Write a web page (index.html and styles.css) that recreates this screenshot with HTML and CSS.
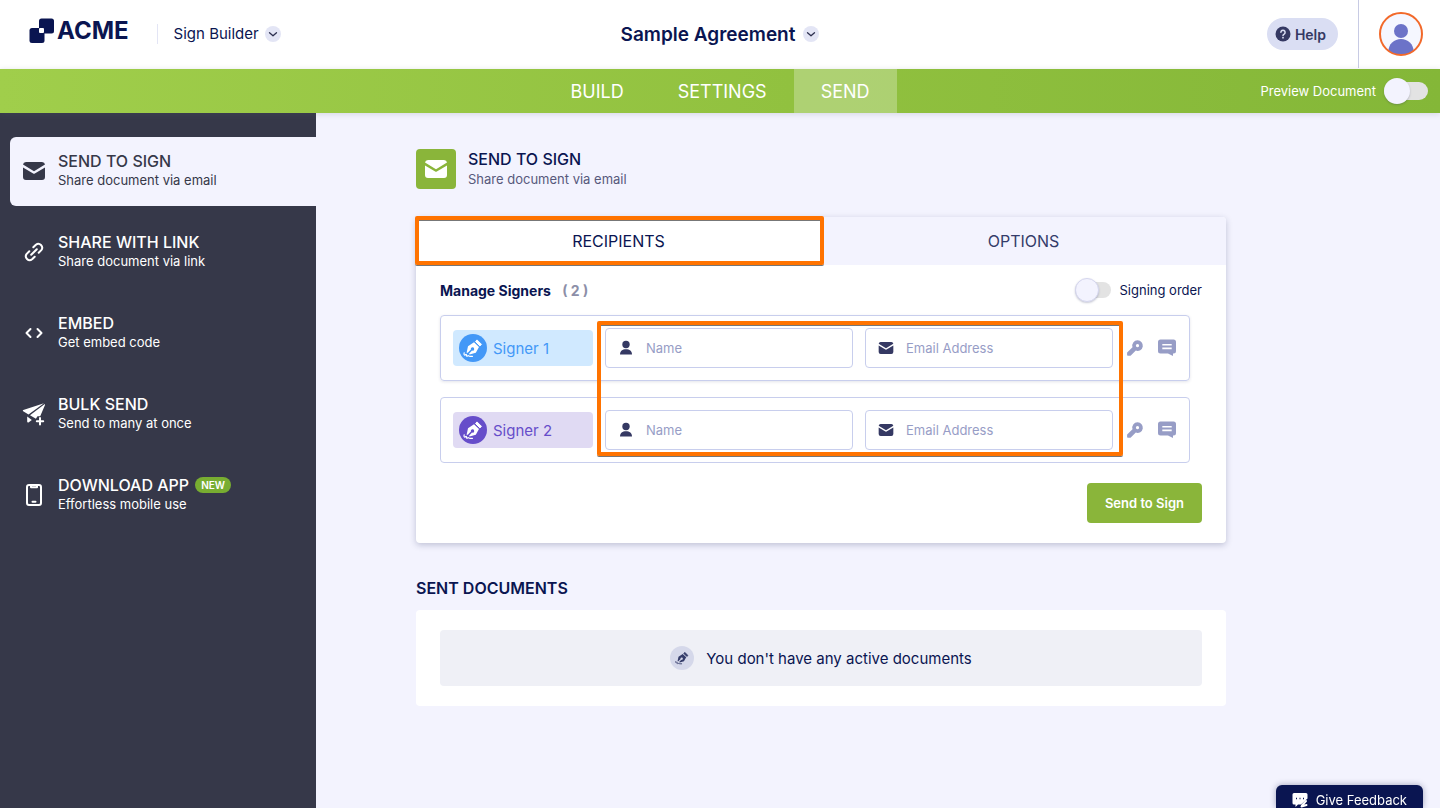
FILE: index.html
```
<!DOCTYPE html>
<html lang="en">
<head>
    <meta charset="UTF-8" />
    <meta name="viewport" content="width=device-width, initial-scale=1" />
    <title>Sign Builder - Sample Agreement</title>
    <link rel="stylesheet" href="styles.css">
</head>
<body>
    <!-- shared icons -->
    <svg class="sprite" aria-hidden="true">
        <symbol id="i-mail" viewBox="0 0 24 20">
            <path d="M4 1h16a3 3 0 0 1 3 2.600L12 10.200 1 3.600A3 3 0 0 1 4 1z" />
            <path d="M1 6.400l10.200 6a1.600 1.600 0 0 0 1.600 0L23 6.400V16a3 3 0 0 1-3 3H4a3 3 0 0 1-3-3z" />
        </symbol>
        <symbol id="i-user" viewBox="0 0 14 16">
            <circle cx="7" cy="4.500" r="3.700" />
            <path d="M1 14.500C1 11 3.500 9.200 7 9.200s6 1.800 6 5.300z" />
        </symbol>
        <symbol id="i-pen" viewBox="0 0 20 20">
            <path fill-rule="evenodd" d="M3.600 14.800L5 8.300 11 4.200 16 9 12.800 14.800 6.600 16.400 6 15.800 9 12.600A1.700 1.700 0 1 0 7.900 11.500L4.800 14.700z" />
            <path d="M12.500 3.500L14 1.900l4.500 4.500-1.600 1.500z" stroke-linejoin="round" stroke="currentColor" />
            <path d="M1.200 14.800c-.6 1.800.2 2.800 1.200 1.900.8-.7 1.300-.3 1 .7-.2.900.7 1 1.500.4.700-.5 1 .5 2 .5h2.600" fill="none" stroke="currentColor" stroke-width="1.200" stroke-linecap="round" />
        </symbol>
        <symbol id="i-key" viewBox="0 0 20 20">
            <path fill-rule="evenodd" d="M12.500 2.300a5.300 5.300 0 1 1-1.700 10.300L5.800 17.500a1.200 1.200 0 0 1-.8.300H2.900a.8.800 0 0 1-.8-.8v-2a1.200 1.200 0 0 1 .3-.8l5.100-5A5.300 5.300 0 0 1 12.500 2.300zm0 3.700a1.600 1.600 0 1 0 .01 0z" />
        </symbol>
        <symbol id="i-note" viewBox="0 0 20 20">
            <path fill-rule="evenodd" d="M3.500 1.500h13A2.500 2.500 0 0 1 19 4v9a2.500 2.500 0 0 1-2.500 2.500H16V18l-5-2.500H3.500A2.500 2.500 0 0 1 1 13V4a2.500 2.500 0 0 1 2.500-2.500zM5.300 6v1.600h9.400V6zm0 3.600v1.600h9.400V9.600z" />
        </symbol>
        <symbol id="i-chevron" viewBox="0 0 16 16">
            <path d="M4.500 6.700L8 9.800l3.500-3.100" fill="none" stroke="#2e3150" stroke-width="1.300" stroke-linecap="round" stroke-linejoin="round" />
        </symbol>
    </svg>

    <header class="header">
        <div class="header-left">
            <a class="logo" href="#">
                <svg width="26" height="26" viewBox="0 0 26 26" aria-hidden="true">
                    <rect x="10" y="0.500" width="15" height="15" rx="2.500" />
                    <rect x="0.500" y="10" width="15" height="15" rx="2.500" />
                    <rect class="logo-gap" x="10" y="10" width="5" height="5" rx="1" />
                </svg>
                <span>ACME</span>
            </a>
            <button type="button" class="product">Sign Builder
                <svg class="chevron"><use href="#i-chevron" /></svg>
            </button>
        </div>
        <button type="button" class="doc-title">Sample Agreement
            <svg class="chevron"><use href="#i-chevron" /></svg>
        </button>
        <div class="header-right">
            <button type="button" class="help">
                <svg width="16" height="16" viewBox="0 0 16 16" aria-hidden="true">
                    <circle cx="8" cy="8" r="7.500" fill="#353963" />
                    <path d="M5.900 6.300a2.100 2.100 0 1 1 3.200 1.800c-.7.400-1.100.7-1.100 1.400" fill="none" stroke="#dadef3" stroke-width="1.500" stroke-linecap="round" />
                    <circle cx="8" cy="11.700" r="0.900" fill="#dadef3" />
                </svg>
                Help
            </button>
            <button type="button" class="account" aria-label="Account">
                <svg width="44" height="44" viewBox="0 0 44 44">
                    <clipPath id="face"><circle cx="22" cy="22" r="21" /></clipPath>
                    <circle cx="22" cy="22" r="21" fill="#f5f7ff" />
                    <g clip-path="url(#face)" fill="#6c73c8">
                        <circle cx="22" cy="19" r="7" />
                        <path d="M9.500 44v-5a12.500 12 0 0 1 25 0v5z" />
                    </g>
                    <circle cx="22" cy="22" r="21" fill="none" stroke="#f2692a" stroke-width="2" />
                </svg>
            </button>
        </div>
    </header>

    <div class="navbar">
        <nav class="steps">
            <a href="#">BUILD</a>
            <a href="#">SETTINGS</a>
            <a href="#" class="active">SEND</a>
        </nav>
        <label class="preview">Preview Document
            <input type="checkbox" class="switch switch-lg">
        </label>
    </div>

    <div class="layout">
        <aside class="sidebar">
            <a href="#" class="side-item active">
                <svg width="24" height="20"><use href="#i-mail" /></svg>
                <span class="side-text"><strong>SEND TO SIGN</strong><small>Share document via email</small></span>
            </a>
            <a href="#" class="side-item">
                <svg width="24" height="24" viewBox="0 0 24 24" class="line">
                    <path d="M9.200 14.800l5.600-5.600M11.300 7.300l2.600-2.600a3.850 3.850 0 0 1 5.400 5.400l-2.600 2.600M12.700 16.700l-2.600 2.600a3.850 3.850 0 0 1-5.400-5.400l2.600-2.600" />
                </svg>
                <span class="side-text"><strong>SHARE WITH LINK</strong><small>Share document via link</small></span>
            </a>
            <a href="#" class="side-item">
                <svg width="24" height="24" viewBox="0 0 24 24" class="line">
                    <path d="M8.500 8l-4 4 4 4M15.500 8l4 4-4 4" />
                </svg>
                <span class="side-text"><strong>EMBED</strong><small>Get embed code</small></span>
            </a>
            <a href="#" class="side-item">
                <svg width="24" height="24" viewBox="0 0 24 24">
                    <path d="M22 1.200L1.300 7.900c-.6.200-.6 1-.1 1.300l5.300 3.200z" />
                    <path d="M22.800 1.900L8 13.200l5.900 3.600 1.600-2.600h2.700L23 3z" />
                    <path d="M5.200 14.500l4.600 3.400-3.300 2.500c-.6.400-1.300.1-1.300-.6z" />
                    <path d="M18 16v6.400M14.800 19.200h6.400" stroke="currentColor" stroke-width="2" stroke-linecap="round" />
                </svg>
                <span class="side-text"><strong>BULK SEND</strong><small>Send to many at once</small></span>
            </a>
            <a href="#" class="side-item">
                <svg width="24" height="24" viewBox="0 0 24 24" class="line">
                    <rect x="5" y="2" width="14" height="20" rx="2" />
                    <path d="M9 3v1.200h6V3M10.500 18.700h3" />
                </svg>
                <span class="side-text"><strong>DOWNLOAD APP <em>NEW</em></strong><small>Effortless mobile use</small></span>
            </a>
        </aside>

        <main class="main">
            <div class="page-head">
                <span class="page-icon"><svg width="24" height="20"><use href="#i-mail" /></svg></span>
                <div>
                    <h1>SEND TO SIGN</h1>
                    <p>Share document via email</p>
                </div>
            </div>

            <section class="card">
                <div class="tabs" role="tablist">
                    <button type="button" role="tab" class="tab active" aria-selected="true">RECIPIENTS</button>
                    <button type="button" role="tab" class="tab" aria-selected="false">OPTIONS</button>
                    <div class="mark mark-tab"></div>
                </div>
                <div class="card-body">
                    <div class="signers-head">
                        <h2>Manage Signers <span>( 2 )</span></h2>
                        <label class="order"><input type="checkbox" class="switch"> Signing order</label>
                    </div>
                    <div class="signers">
                        <div class="signer blue">
                            <div class="chip"><span class="pen"><svg width="20" height="20"><use href="#i-pen" /></svg></span>Signer 1</div>
                            <label class="field"><svg width="14" height="16"><use href="#i-user" /></svg><input type="text" placeholder="Name" aria-label="Signer 1 name"></label>
                            <label class="field"><svg width="16" height="14"><use href="#i-mail" /></svg><input type="email" placeholder="Email Address" aria-label="Signer 1 email"></label>
                            <button type="button" class="tool" aria-label="Set password"><svg width="20" height="20"><use href="#i-key" /></svg></button>
                            <button type="button" class="tool" aria-label="Add message"><svg width="20" height="20"><use href="#i-note" /></svg></button>
                        </div>
                        <div class="signer purple">
                            <div class="chip"><span class="pen"><svg width="20" height="20"><use href="#i-pen" /></svg></span>Signer 2</div>
                            <label class="field"><svg width="14" height="16"><use href="#i-user" /></svg><input type="text" placeholder="Name" aria-label="Signer 2 name"></label>
                            <label class="field"><svg width="16" height="14"><use href="#i-mail" /></svg><input type="email" placeholder="Email Address" aria-label="Signer 2 email"></label>
                            <button type="button" class="tool" aria-label="Set password"><svg width="20" height="20"><use href="#i-key" /></svg></button>
                            <button type="button" class="tool" aria-label="Add message"><svg width="20" height="20"><use href="#i-note" /></svg></button>
                        </div>
                        <div class="mark mark-fields"></div>
                    </div>
                    <button type="button" class="send">Send to Sign</button>
                </div>
            </section>

            <h2 class="sent-title">SENT DOCUMENTS</h2>
            <section class="sent">
                <p><span class="empty-icon"><svg width="14" height="14"><use href="#i-pen" /></svg></span>You don't have any active documents</p>
            </section>
        </main>
    </div>

    <button type="button" class="feedback">
        <svg width="16" height="16" viewBox="0 0 16 16" aria-hidden="true">
            <path d="M2 1h12a1.500 1.500 0 0 1 1.500 1.500v4L9 12.500H6L3.500 15v-2.500H2A1.500 1.500 0 0 1 .5 11V2.500A1.500 1.500 0 0 1 2 1z" fill="#fff" />
            <path d="M4 6.500h1M7.500 6.500h1M11 6.500h1" stroke="#0a1551" stroke-width="1.500" />
            <path d="M10 13.500l4-4.500M9.500 14.500l5-1.500" stroke="#fff" stroke-width="2" stroke-linecap="round" />
        </svg>
        Give Feedback
    </button>
</body>
</html>
```
FILE: styles.css
```
* {
    box-sizing: border-box;
}
body {
    margin: 0;
    min-height: 100vh;
    display: flex;
    flex-direction: column;
    font-family: Inter, "Liberation Sans", sans-serif;
    font-size: 13px;
    color: #0a1551;
    background: #f3f3fe;
}
h1, h2, p {
    margin: 0;
}
a {
    color: inherit;
    text-decoration: none;
}
button {
    font: inherit;
    color: inherit;
    background: none;
    border: 0;
    padding: 0;
    cursor: pointer;
}
svg {
    fill: currentColor;
    flex: none;
    display: block;
}
.sprite {
    position: absolute;
    width: 0;
    height: 0;
}

/* header */
.header {
    display: grid;
    grid-template-columns: 1fr auto 1fr;
    align-items: center;
    height: 69px;
    padding-bottom: 1px;
    background: #fff;
}
.header-left {
    display: flex;
    align-items: center;
    padding-left: 29px;
}
.logo {
    display: flex;
    align-items: center;
    gap: 2px;
    font-size: 24px;
    font-weight: 700;
    line-height: 24px;
    padding-bottom: 6px;
}
.logo-gap {
    fill: #fff;
}
.product, .doc-title {
    display: flex;
    align-items: center;
}
.product {
    gap: 6px;
    margin-left: 28px;
    padding-left: 16px;
    border-left: 1px solid #e3e5f5;
    font-size: 15px;
    line-height: 20px;
}
.doc-title {
    gap: 8px;
    font-size: 19px;
    font-weight: 600;
}
.chevron {
    width: 16px;
    height: 16px;
    border-radius: 50%;
    background: #e3e5f5;
}
.header-right {
    display: flex;
    align-items: center;
    justify-content: flex-end;
    gap: 20px;
    height: 68px;
}
.help {
    display: flex;
    align-items: center;
    gap: 4px;
    height: 32px;
    padding: 0 12px 0 8px;
    border-radius: 16px;
    background: #dadef3;
    color: #353963;
    font-size: 14px;
    font-weight: 600;
}
.account {
    height: 100%;
    padding: 0 17px 0 20px;
    border-left: 1px solid #c8cbe4;
}

/* green bar */
.navbar {
    display: grid;
    grid-template-columns: 1fr auto 1fr;
    height: 44px;
    background: linear-gradient(90deg, #a0ce4b, #91c13f 55%, #84b738);
    color: #fff;
    box-shadow: 0 1px 6px rgba(84, 95, 111, 0.2);
    z-index: 1;
}
.steps {
    grid-column: 2;
    display: flex;
    font-size: 18px;
}
.steps a {
    display: flex;
    align-items: center;
    padding: 0 27px;
}
.steps a.active {
    background: rgba(255, 255, 255, 0.27);
}
.preview {
    display: flex;
    align-items: center;
    justify-content: flex-end;
    gap: 8px;
    padding-right: 12px;
}

/* switch */
.switch {
    appearance: none;
    display: flex;
    align-items: center;
    width: 36px;
    height: 16px;
    margin: 0;
    border-radius: 8px;
    background: #e3e3e3;
}
.switch::before {
    content: "";
    flex: none;
    width: 22px;
    height: 22px;
    border-radius: 50%;
    border: 1px solid #d5d6ee;
    background: #f3f3fe;
    box-shadow: 0 1px 2px rgba(37, 45, 91, 0.25);
}
.switch:checked {
    justify-content: flex-end;
}
.switch-lg {
    width: 44px;
    height: 18px;
    border-radius: 9px;
}
.switch-lg::before {
    width: 26px;
    height: 26px;
    border: 0;
}

/* sidebar */
.layout {
    flex: 1;
    display: flex;
}
.sidebar {
    flex: none;
    width: 316px;
    padding: 24px 0 24px 10px;
    display: flex;
    flex-direction: column;
    gap: 12px;
    background: #363849;
    color: #fff;
}
.side-item {
    display: flex;
    align-items: center;
    gap: 12px;
    min-height: 69px;
    padding: 0 12px 2px;
    border-radius: 6px 0 0 6px;
}
.side-item.active {
    background: #f3f3fe;
    color: #363849;
}
.line {
    fill: none;
    stroke: currentColor;
    stroke-width: 2;
    stroke-linecap: round;
    stroke-linejoin: round;
}
.side-text strong {
    display: flex;
    align-items: center;
    gap: 6px;
    font-size: 16px;
    font-weight: 500;
    line-height: 20px;
}
.side-text small {
    display: block;
    font-size: 13px;
    line-height: 19px;
}
.side-text em {
    padding: 0 6px;
    border-radius: 8px;
    background: #78ad31;
    font-size: 10px;
    font-style: normal;
    font-weight: 600;
    line-height: 16px;
}

/* content */
.main {
    flex: 1;
    max-width: 1010px;
    padding: 36px 100px;
}
.page-head {
    display: flex;
    align-items: center;
    gap: 12px;
}
.page-icon {
    display: flex;
    align-items: center;
    justify-content: center;
    width: 40px;
    height: 40px;
    border-radius: 4px;
    background: #8ab53a;
    color: #fff;
}
.page-head h1 {
    font-size: 16px;
    font-weight: 500;
    line-height: 20px;
}
.page-head p {
    line-height: 20px;
    color: #57597c;
}
.card {
    margin-top: 28px;
    border-radius: 4px;
    background: #fff;
    box-shadow: 0 2px 6px rgba(37, 45, 91, 0.25);
}
.tabs {
    position: relative;
    display: flex;
    height: 48px;
    font-size: 16px;
}
.tab {
    flex: 1;
    background: #f3f3fe;
    color: #343c6a;
    border-radius: 0 4px 0 0;
}
.tab.active {
    background: #fff;
    color: #0a1551;
}
.mark {
    position: absolute;
    border: 4px solid #ff7300;
    border-radius: 2px;
    box-shadow: 0 1px 0 #777, inset 0 1px 0 #777;
    pointer-events: none;
}
.mark-tab {
    top: -1px;
    left: -1px;
    width: calc(50% + 4px);
    height: 49px;
}
.mark-fields {
    top: 6px;
    bottom: 7px;
    left: 157px;
    right: 67px;
}
.card-body {
    padding: 0 24px 20px;
    display: flex;
    flex-direction: column;
}
.signers-head {
    display: flex;
    align-items: center;
    justify-content: space-between;
    height: 50px;
}
.signers-head h2 {
    font-size: 14px;
    font-weight: 700;
}
.signers-head span {
    margin-left: 8px;
    color: #8d8fa8;
}
.order {
    display: flex;
    align-items: center;
    gap: 8px;
}
.signers {
    position: relative;
    display: flex;
    flex-direction: column;
    gap: 16px;
    margin-right: 12px;
}
.signer {
    display: flex;
    align-items: center;
    gap: 12px;
    height: 66px;
    padding: 0 12px;
    border: 1px solid #c8ceed;
    border-radius: 4px;
}
.signer.blue {
    box-shadow: 0 1px 3px rgba(37, 45, 91, 0.12);
}
.chip {
    display: flex;
    align-items: center;
    gap: 6px;
    width: 140px;
    height: 36px;
    padding: 0 6px;
    border-radius: 4px;
    font-size: 15px;
}
.pen {
    display: flex;
    align-items: center;
    justify-content: center;
    width: 28px;
    height: 28px;
    border-radius: 50%;
    color: #fff;
}
.blue .chip {
    background: #d0e9ff;
    color: #4398f7;
}
.blue .pen {
    background: #4398f7;
}
.purple .chip {
    background: #e0daf3;
    color: #664dca;
}
.purple .pen {
    background: #664dca;
}
.field {
    flex: 1;
    min-width: 0;
    display: flex;
    align-items: center;
    gap: 12px;
    height: 40px;
    padding: 0 12px;
    border: 1px solid #c8ceed;
    border-radius: 4px;
    background: #fff;
    color: #353963;
}
.field svg {
    width: 16px;
}
.field input {
    flex: 1;
    min-width: 0;
    border: 0;
    padding: 0;
    outline: none;
    background: none;
    font: inherit;
}
.field input::placeholder {
    color: #979dc6;
}
.tool {
    color: #979dc6;
}
.send {
    align-self: flex-end;
    height: 40px;
    margin-top: 20px;
    padding: 0 18px;
    border-radius: 4px;
    background: #8ab53a;
    color: #fff;
    font-weight: 600;
}
.sent-title {
    margin: 35px 0 12px;
    font-size: 16px;
    font-weight: 600;
    line-height: 20px;
}
.sent {
    padding: 20px 24px;
    border-radius: 4px;
    background: #fff;
}
.sent p {
    display: flex;
    align-items: center;
    justify-content: center;
    gap: 12px;
    height: 56px;
    border-radius: 4px;
    background: #eff0f6;
    font-size: 15px;
}
.empty-icon {
    display: flex;
    align-items: center;
    justify-content: center;
    width: 24px;
    height: 24px;
    border-radius: 50%;
    background: #d5d8ea;
    color: #343c6a;
}

/* feedback tab sticks to the window's lower edge */
.feedback {
    position: fixed;
    right: 17px;
    bottom: 0;
    display: flex;
    align-items: center;
    gap: 8px;
    padding: 7px 16px 0;
    border-radius: 6px 6px 0 0;
    background: #0a1551;
    color: #fff;
    line-height: 16px;
    box-shadow: 0 0 6px rgba(37, 45, 91, 0.4);
}
```
